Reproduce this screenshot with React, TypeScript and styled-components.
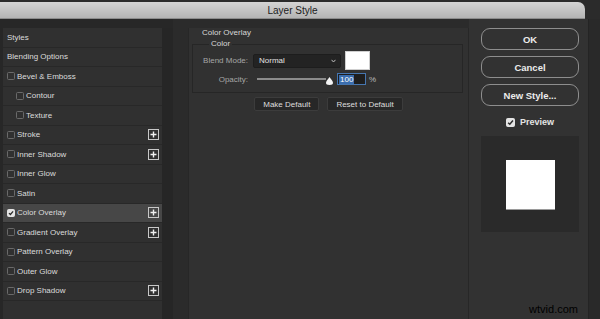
import styled, { createGlobalStyle } from 'styled-components';

const GlobalStyle = createGlobalStyle`
  html, body {
    margin: 0;
    padding: 0;
    background: #2b2b2b;
  }
  body {
    width: 600px;
    height: 319px;
    overflow: hidden;
    font-family: "Liberation Sans", Arial, sans-serif;
  }
`;

type StyleItem = {
  label: string;
  checkbox?: boolean;
  indent?: boolean;
  plus?: boolean;
  checked?: boolean;
  active?: boolean;
};

const STYLE_ITEMS: StyleItem[] = [
  { label: 'Styles' },
  { label: 'Blending Options' },
  { label: 'Bevel & Emboss', checkbox: true },
  { label: 'Contour', checkbox: true, indent: true },
  { label: 'Texture', checkbox: true, indent: true },
  { label: 'Stroke', checkbox: true, plus: true },
  { label: 'Inner Shadow', checkbox: true, plus: true },
  { label: 'Inner Glow', checkbox: true },
  { label: 'Satin', checkbox: true },
  { label: 'Color Overlay', checkbox: true, plus: true, checked: true, active: true },
  { label: 'Gradient Overlay', checkbox: true, plus: true },
  { label: 'Pattern Overlay', checkbox: true },
  { label: 'Outer Glow', checkbox: true },
  { label: 'Drop Shadow', checkbox: true, plus: true },
];

// small check box, used in the list and for Preview
const CheckBox = ({ checked, size = 8 }: { checked?: boolean; size?: number }) => (
  <Box $checked={checked} $size={size}>
    {checked && (
      <svg width={size - 2} height={size - 2} viewBox="0 0 8 8">
        <path d="M1.3 4.2 L3.2 6 L6.8 1.8" fill="none" stroke="#2b2b2b" strokeWidth="1.7" />
      </svg>
    )}
  </Box>
);

const PlusIcon = () => (
  <PlusBox>
    <svg width="7" height="7" viewBox="0 0 7 7">
      <path d="M3.5 0.5 V6.5 M0.5 3.5 H6.5" stroke="#f0f0f0" strokeWidth="1.4" />
    </svg>
  </PlusBox>
);

export default function App() {
  return (
    <>
      <GlobalStyle />
      <Window>
        <TitleBar>Layer Style</TitleBar>
        <Body>
          <Sidebar>
            <StyleList>
              {STYLE_ITEMS.map((item) => (
                <StyleRow key={item.label} $active={item.active} $indent={item.indent}>
                  {item.checkbox && <CheckBox checked={item.checked} />}
                  <RowLabel>{item.label}</RowLabel>
                  {item.plus && <PlusIcon />}
                </StyleRow>
              ))}
            </StyleList>
            <ListGutter />
          </Sidebar>

          <Main>
            <Heading>Color Overlay</Heading>
            <Group>
              <Legend>Color</Legend>
              <FieldGrid>
                <FieldLabel>Blend Mode:</FieldLabel>
                <Controls>
                  <Select>
                    <span>Normal</span>
                    <svg width="5" height="4" viewBox="0 0 5 4">
                      <path d="M0.5 0.8 L2.5 3 L4.5 0.8" fill="none" stroke="#bdbdbd" strokeWidth="1" />
                    </svg>
                  </Select>
                  <Swatch />
                </Controls>
                <FieldLabel>Opacity:</FieldLabel>
                <Controls>
                  <Slider>
                    <Track />
                    <svg width="7" height="8" viewBox="0 0 7 8">
                      <path
                        d="M3.5 0 C4.3 1.4 7 4 7 5.8 C7 7.4 6 8 3.5 8 C1 8 0 7.4 0 5.8 C0 4 2.7 1.4 3.5 0 Z"
                        fill="#f4f4f4"
                      />
                    </svg>
                  </Slider>
                  <NumberField>
                    <Selected>100</Selected>
                  </NumberField>
                  <Unit>%</Unit>
                </Controls>
              </FieldGrid>
            </Group>
            <ButtonRow>
              <FlatButton>Make Default</FlatButton>
              <FlatButton>Reset to Default</FlatButton>
            </ButtonRow>
          </Main>

          <Actions>
            <PillButton>OK</PillButton>
            <PillButton>Cancel</PillButton>
            <PillButton>New Style...</PillButton>
            <PreviewToggle>
              <CheckBox checked size={9} />
              <span>Preview</span>
            </PreviewToggle>
            <PreviewBox>
              <PreviewSquare />
            </PreviewBox>
          </Actions>

          <Edge />
        </Body>
        <Watermark>wtvid.com</Watermark>
      </Window>
    </>
  );
}

const Window = styled.div`
  position: relative;
  width: 600px;
  height: 319px;
  background: #2b2b2b;
  overflow: hidden;
`;

const TitleBar = styled.div`
  margin-top: 2px;
  width: 585px;
  height: 17px;
  border-radius: 0 7px 0 0;
  background: linear-gradient(#d4d4d4, #b2b2b2);
  box-shadow: inset 0 -1px 0 #8c8c8c;
  display: flex;
  align-items: center;
  justify-content: center;
  font-size: 10px;
  color: #1c1c1c;
`;

const Body = styled.div`
  display: flex;
  height: 300px;
`;

const Sidebar = styled.div`
  width: 173px;
  flex: none;
  display: flex;
  padding-top: 9px;
  box-sizing: border-box;
  background: #272727;
`;

const StyleList = styled.div`
  margin-left: 3px;
  width: 159px;
  background: #303030;
  display: flex;
  flex-direction: column;
`;

const ListGutter = styled.div`
  width: 11px;
  background: #262626;
`;

const StyleRow = styled.div<{ $active?: boolean; $indent?: boolean }>`
  height: 19.5px;
  flex: none;
  box-sizing: border-box;
  display: flex;
  align-items: center;
  gap: 2px;
  padding: 0 3px 0 ${({ $indent }) => ($indent ? 13 : 4)}px;
  border-bottom: 1px solid #282828;
  background: ${({ $active }) => ($active ? '#474747' : 'transparent')};
`;

const RowLabel = styled.span`
  flex: 1;
  font-size: 8px;
  color: #dcdcdc;
  white-space: nowrap;
`;

const Box = styled.span<{ $checked?: boolean; $size: number }>`
  width: ${({ $size }) => $size}px;
  height: ${({ $size }) => $size}px;
  flex: none;
  box-sizing: border-box;
  border-radius: 1.5px;
  border: 1px solid ${({ $checked }) => ($checked ? '#e4e4e4' : '#6a6a6a')};
  background: ${({ $checked }) => ($checked ? '#e4e4e4' : 'transparent')};
  display: flex;
  align-items: center;
  justify-content: center;
`;

const PlusBox = styled.span`
  width: 11px;
  height: 11px;
  box-sizing: border-box;
  border: 1px solid #c8c8c8;
  display: flex;
  align-items: center;
  justify-content: center;
`;

const Main = styled.div`
  margin: 9px 0 0 15px;
  width: 281px;
  flex: none;
  box-sizing: border-box;
  background: #313131;
  border-left: 1px solid #272727;
  border-right: 1px solid #272727;
`;

const Heading = styled.div`
  margin: 0 0 1px 13px;
  font-size: 8px;
  line-height: 10px;
  color: #d8d8d8;
`;

const Group = styled.fieldset`
  margin: 0 0 0 3px;
  width: 271px;
  box-sizing: border-box;
  padding: 2px 0 7px 0;
  border: 1px solid #262626;
  min-width: 0;
`;

const Legend = styled.legend`
  margin-left: 16px;
  padding: 0 2px;
  font-size: 8px;
  line-height: 10px;
  color: #d8d8d8;
`;

const FieldGrid = styled.div`
  display: grid;
  grid-template-columns: 55px auto;
  column-gap: 5px;
  row-gap: 3px;
  align-items: center;
`;

const FieldLabel = styled.span`
  text-align: right;
  font-size: 8px;
  color: #a6a6a6;
`;

const Controls = styled.div`
  display: flex;
  align-items: center;
`;

const Select = styled.div`
  width: 88px;
  height: 14px;
  box-sizing: border-box;
  padding: 0 4px 0 5px;
  background: #232323;
  border: 1px solid #1d1d1d;
  border-radius: 2px;
  display: flex;
  align-items: center;
  justify-content: space-between;
  font-size: 8px;
  color: #e2e2e2;
`;

const Swatch = styled.div`
  margin-left: 4px;
  width: 25px;
  height: 19px;
  box-sizing: border-box;
  background: #fff;
  border: 1px solid #cfcfcf;
`;

const Slider = styled.div`
  width: 80px;
  height: 12px;
  display: flex;
  align-items: center;
  svg {
    margin-top: 4px;
  }
`;

const Track = styled.div`
  margin-left: 4px;
  width: 69px;
  height: 1.5px;
  background: #8c8c8c;
`;

const NumberField = styled.div`
  margin-left: 4px;
  width: 29px;
  height: 12px;
  box-sizing: border-box;
  border: 1px solid #4676b0;
  background: #1e1e1e;
  display: flex;
  align-items: center;
  padding-left: 1px;
`;

const Selected = styled.span`
  background: #3b6eaf;
  color: #fff;
  font-size: 8px;
  line-height: 9px;
  padding: 0 1px;
`;

const Unit = styled.span`
  margin-left: 3px;
  font-size: 8px;
  color: #bcbcbc;
`;

const ButtonRow = styled.div`
  margin-top: 4px;
  display: flex;
  justify-content: center;
  gap: 8px;
`;

const FlatButton = styled.button`
  height: 14px;
  padding: 0 8px;
  background: #272727;
  border: 1px solid #3c3c3c;
  border-radius: 2px;
  font-family: inherit;
  font-size: 8px;
  color: #dedede;
`;

const Actions = styled.div`
  width: 119px;
  flex: none;
  box-sizing: border-box;
  padding: 9px 9px 0 12px;
  background: #323232;
  display: flex;
  flex-direction: column;
`;

const PillButton = styled.button`
  height: 22px;
  margin-bottom: 6px;
  background: transparent;
  border: 1.5px solid #8e8e8e;
  border-radius: 9px;
  font-family: inherit;
  font-weight: bold;
  font-size: 9.5px;
  color: #ececec;
`;

const PreviewToggle = styled.div`
  margin-top: 5px;
  display: flex;
  align-items: center;
  justify-content: center;
  gap: 5px;
  font-size: 9px;
  font-weight: bold;
  color: #e4e4e4;
`;

const PreviewBox = styled.div`
  margin-top: 9px;
  height: 96px;
  background: #2a2a2a;
  display: flex;
  align-items: center;
  justify-content: center;
`;

const PreviewSquare = styled.div`
  width: 49px;
  height: 49px;
  background: #fff;
  box-shadow: 0 1px 0 #9a9a9a;
`;

const Edge = styled.div`
  flex: 1;
  background: #292929;
  border-left: 1px solid #242424;
`;

const Watermark = styled.div`
  position: absolute;
  right: 22px;
  bottom: 4px;
  font-family: Arial, "Liberation Sans", sans-serif;
  font-size: 11px;
  color: #000;
`;
